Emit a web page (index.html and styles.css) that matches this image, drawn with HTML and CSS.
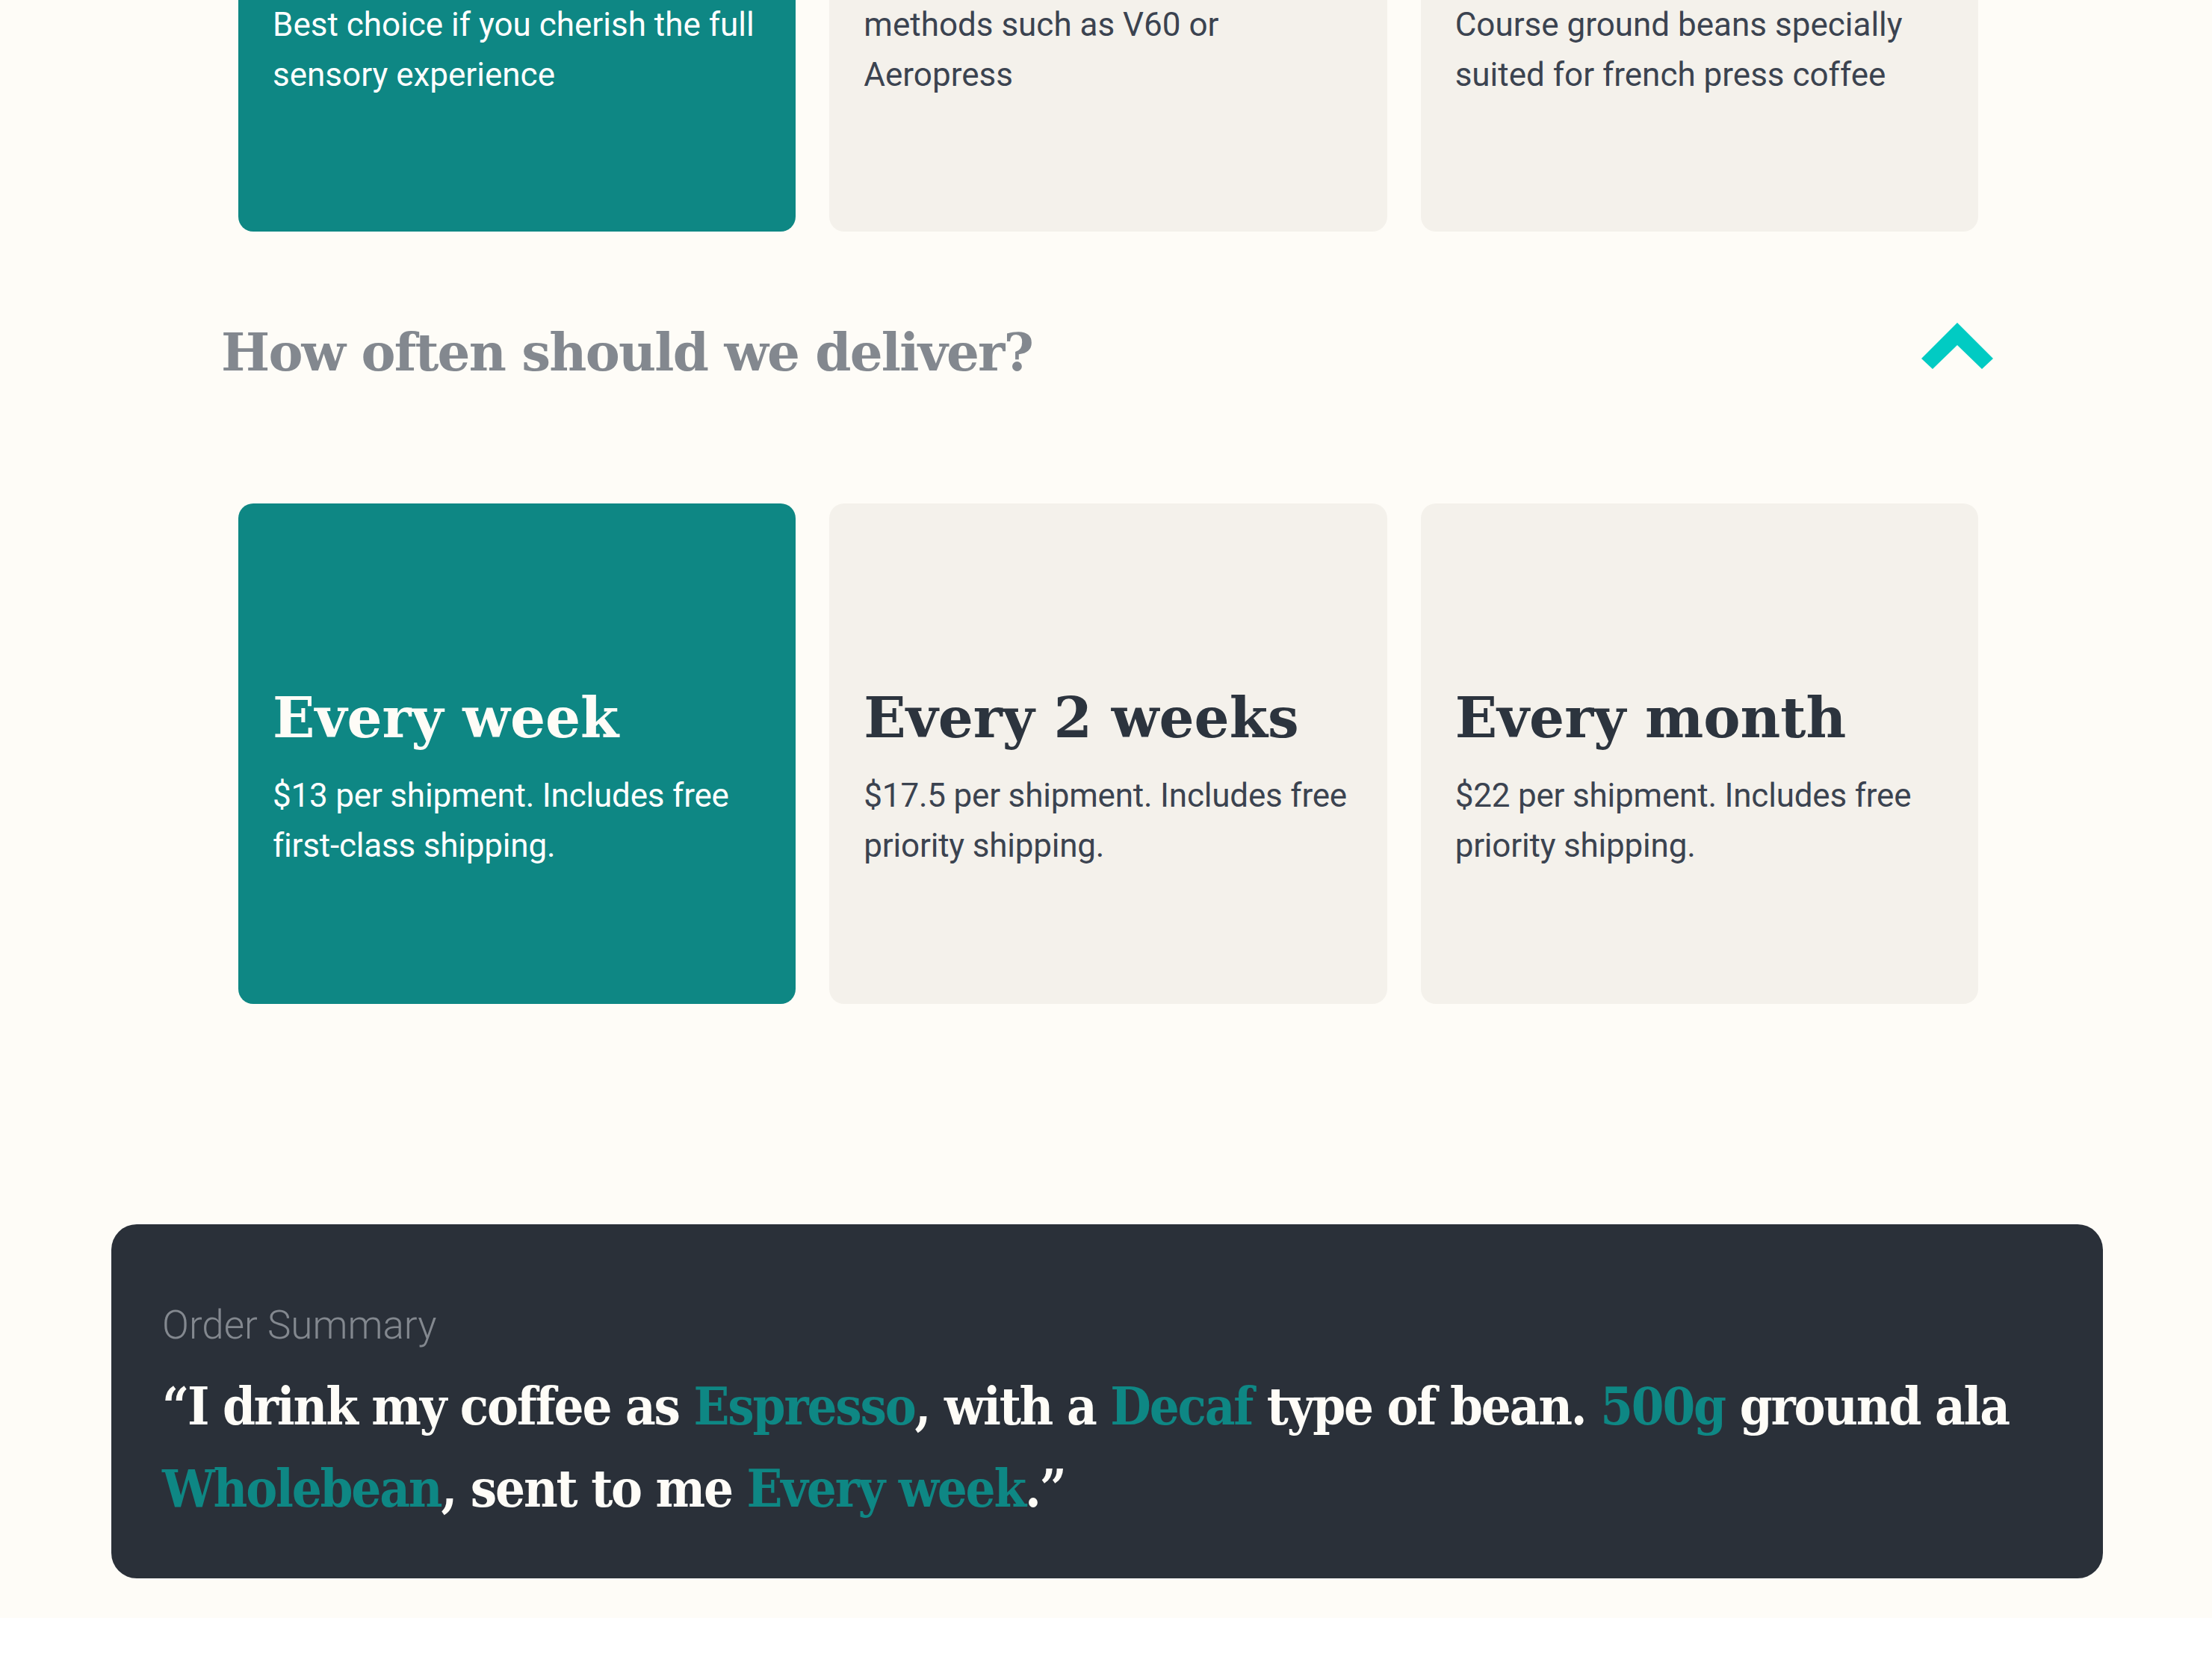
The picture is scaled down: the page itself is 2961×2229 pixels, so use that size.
FILE: index.html
```html
<!DOCTYPE html>
<html lang="en">
<head>
<meta charset="utf-8">
<title>Create plan</title>
<link rel="stylesheet" href="styles.css">
</head>
<body>
<main class="page">
  <section class="option-row grind-row">
    <div class="option-card grind-card is-selected">
      <p class="option-desc">Best choice if you cherish the full sensory experience</p>
    </div>
    <div class="option-card grind-card">
      <p class="option-desc">methods such as V60 or Aeropress</p>
    </div>
    <div class="option-card grind-card">
      <p class="option-desc">Course ground beans specially suited for french press coffee</p>
    </div>
  </section>

  <section class="question">
    <div class="question-head">
      <h2 class="question-title">How often should we deliver?</h2>
      <svg class="chevron" viewBox="0 0 96 62" aria-hidden="true">
        <polygon points="48,0 96,48 81,62 48,30 15,62 0,48"/>
      </svg>
    </div>
    <div class="option-row freq-row">
      <div class="option-card freq-card is-selected">
        <h3 class="option-title">Every week</h3>
        <p class="option-desc">$13 per shipment. Includes free first-class shipping.</p>
      </div>
      <div class="option-card freq-card">
        <h3 class="option-title">Every 2 weeks</h3>
        <p class="option-desc">$17.5 per shipment. Includes free priority shipping.</p>
      </div>
      <div class="option-card freq-card">
        <h3 class="option-title">Every month</h3>
        <p class="option-desc">$22 per shipment. Includes free priority shipping.</p>
      </div>
    </div>
  </section>

  <section class="summary">
    <p class="summary-label">Order Summary</p>
    <p class="summary-text">“I drink my coffee as <span class="hl">Espresso</span>, with a <span class="hl">Decaf</span> type of bean. <span class="hl">500g</span> ground ala <span class="hl">Wholebean</span>, sent to me <span class="hl">Every week</span>.”</p>
  </section>
</main>
</body>
</html>
```

FILE: styles.css
```css
* {
  box-sizing: border-box;
}

html,
body {
  margin: 0;
  background: #ffffff;
}

.page {
  display: flex;
  flex-direction: column;
  background: #fefcf7;
  padding: 0 146px 53px 149px;
}

.option-row {
  display: grid;
  grid-template-columns: repeat(3, 1fr);
  column-gap: 45px;
  margin: 0 167px 0 170px;
}

.option-card {
  background: #f4f1eb;
  border-radius: 20px;
  color: #3b4350;
}

.option-card.is-selected {
  background: #0e8784;
  color: #ffffff;
}

.grind-row {
  margin-top: -60px;
}

.grind-card {
  height: 370px;
  padding: 60px 40px 0 46px;
}

.grind-card .option-desc {
  letter-spacing: 0;
}

.question-head {
  display: flex;
  justify-content: space-between;
  align-items: flex-start;
  margin: 117px 147px 0 147px;
}

.question-title {
  margin: 0;
  font-family: "DejaVu Serif", "Liberation Serif", serif;
  font-weight: 700;
  font-size: 69px;
  line-height: 90px;
  letter-spacing: -1.8px;
  color: #83888f;
}

.chevron {
  width: 96px;
  height: 62px;
  margin-top: 5px;
  fill: #01cbc3;
}

.freq-row {
  margin-top: 157px;
}

.freq-card {
  height: 670px;
  padding: 247px 40px 0 46px;
}

.option-title {
  margin: 0 0 31px;
  font-family: "DejaVu Serif", "Liberation Serif", serif;
  font-weight: 700;
  font-size: 74px;
  line-height: 80px;
  color: #2c343e;
}

.is-selected .option-title {
  color: #fefcf7;
}

.option-desc {
  margin: 0;
  font-family: Roboto, "Liberation Sans", sans-serif;
  font-weight: 400;
  font-size: 44px;
  line-height: 67px;
  letter-spacing: -0.2px;
}

.summary {
  margin-top: 295px;
  background: #2a3039;
  border-radius: 34px;
  padding: 103px 68px 65px;
}

.summary-label {
  margin: 0 0 22px;
  font-family: Roboto, "Liberation Sans", sans-serif;
  font-weight: 300;
  font-size: 53px;
  line-height: 64px;
  color: #83888f;
}

.summary-text {
  margin: 0;
  font-family: "DejaVu Serif", "Liberation Serif", serif;
  font-weight: 700;
  font-stretch: condensed;
  font-size: 70px;
  line-height: 110px;
  letter-spacing: -2.2px;
  color: #fefcf7;
}

.hl {
  color: #0e8784;
}
```
